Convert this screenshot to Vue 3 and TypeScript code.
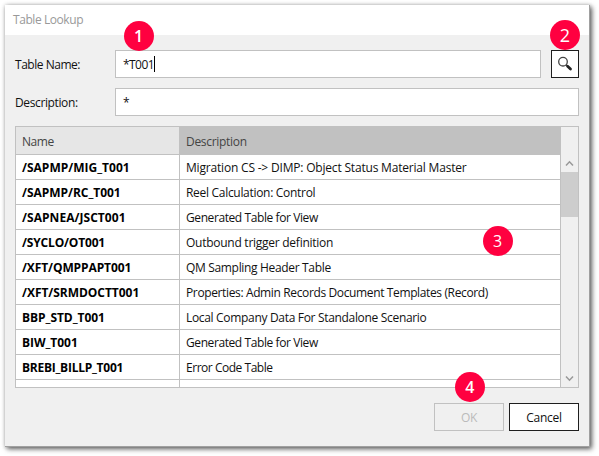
<script setup lang="ts">
import { ref } from 'vue'

interface TableRow {
  name: string
  description: string
  nameTracking: number
  descTracking: number
}

const tableName = ref('*T001')
const description = ref('*')

const rows: TableRow[] = [
  { name: '/SAPMP/MIG_T001', description: 'Migration CS -> DIMP: Object Status Material Master', nameTracking: 0, descTracking: -0.19 },
  { name: '/SAPMP/RC_T001', description: 'Reel Calculation: Control', nameTracking: -0.04, descTracking: -0.3 },
  { name: '/SAPNEA/JSCT001', description: 'Generated Table for View', nameTracking: 0.05, descTracking: -0.41 },
  { name: '/SYCLO/OT001', description: 'Outbound trigger definition', nameTracking: -0.17, descTracking: -0.26 },
  { name: '/XFT/QMPPAPT001', description: 'QM Sampling Header Table', nameTracking: -0.1, descTracking: -0.33 },
  { name: '/XFT/SRMDOCTT001', description: 'Properties: Admin Records Document Templates (Record)', nameTracking: -0.04, descTracking: -0.37 },
  { name: 'BBP_STD_T001', description: 'Local Company Data For Standalone Scenario', nameTracking: -0.05, descTracking: -0.32 },
  { name: 'BIW_T001', description: 'Generated Table for View', nameTracking: -0.05, descTracking: -0.41 },
  { name: 'BREBI_BILLP_T001', description: 'Error Code Table', nameTracking: -0.26, descTracking: -0.47 },
  { name: '', description: '', nameTracking: 0, descTracking: 0 },
]
</script>

<template>
  <div class="stage">
    <section class="dialog">
      <header class="title">Table Lookup</header>
      <div class="body">
        <div class="field">
          <span class="label label-name">Table Name:</span>
          <div class="input"><span class="value">{{ tableName }}</span><i class="caret"></i></div>
          <button class="search" aria-label="Search">
            <svg width="16" height="16" viewBox="0 0 16 16">
              <circle cx="6" cy="5.7" r="4.3" fill="#fff" stroke="#444" stroke-width="1.3" />
              <path d="M9 8.8l1.7 1.6" stroke="#444" stroke-width="1.3" />
              <path d="M10.6 10.3l2.9 2.8" stroke="#222" stroke-width="2.8" stroke-linecap="round" />
            </svg>
          </button>
        </div>
        <div class="field">
          <span class="label label-desc">Description:</span>
          <div class="input"><span class="value">{{ description }}</span></div>
        </div>
        <div class="grid">
          <div class="rows">
            <div class="row head">
              <div class="cell name">Name</div>
              <div class="cell desc">Description</div>
            </div>
            <div v-for="(row, i) in rows" :key="i" class="row">
              <div class="cell name" :style="{ letterSpacing: row.nameTracking + 'px' }">{{ row.name }}</div>
              <div class="cell desc" :style="{ letterSpacing: row.descTracking + 'px' }">{{ row.description }}</div>
            </div>
          </div>
          <div class="scroll">
            <svg class="arrow" width="9" height="7" viewBox="0 0 9 7"><path d="M1 5.6L4.5 1.8L8 5.6" /></svg>
            <div class="thumb"></div>
            <svg class="arrow down" width="9" height="7" viewBox="0 0 9 7"><path d="M1 1.4L4.5 5.2L8 1.4" /></svg>
          </div>
        </div>
        <footer class="actions">
          <button class="btn" disabled>OK</button>
          <button class="btn cancel">Cancel</button>
        </footer>
      </div>
    </section>
    <span class="badge b1">1</span>
    <span class="badge b2">2</span>
    <span class="badge b3">3</span>
    <span class="badge b4">4</span>
  </div>
</template>

<style>
body {
  background: #fff;
  overflow: hidden;
}
</style>

<style scoped>
.stage {
  position: relative;
  box-sizing: border-box;
  width: 599px;
  height: 456px;
  padding: 5px;
  font: 12px/16px 'Open Sans', 'Noto Sans', sans-serif;
  letter-spacing: -0.3px;
  color: #111;
}
.stage * {
  box-sizing: border-box;
}
.dialog {
  width: 585px;
  height: 442px;
  background: #f0f0f0;
  border-right: 1px solid #a0a0a0;
  border-bottom: 1px solid #a0a0a0;
  box-shadow: 2px 2px 5px rgba(0, 0, 0, 0.6), 0 0 4px rgba(0, 0, 0, 0.2);
}
.title {
  height: 30px;
  padding: 7px 8px;
  background: #fff;
  color: #999;
  letter-spacing: -0.43px;
}
.body {
  display: flex;
  flex-direction: column;
  gap: 10px;
  padding: 15px 10px 0;
}
.field {
  display: flex;
  height: 28px;
}
.label {
  width: 100px;
  line-height: 30px;
}
.label-name {
  letter-spacing: -0.47px;
}
.label-desc {
  letter-spacing: -0.38px;
}
.input {
  flex: 1;
  display: flex;
  align-items: center;
  padding-left: 7px;
  background: #fff;
  border: 1px solid #c1c1c1;
}
.value {
  padding-top: 1px;
  letter-spacing: -0.55px;
}
.caret {
  width: 1px;
  height: 16px;
  background: #000;
}
.search {
  display: flex;
  width: 28px;
  margin-left: 10px;
  padding: 5px 0 0 5px;
  background: #fff;
  border: 1px solid #1e1e1e;
}
.grid {
  display: flex;
  height: 262px;
  border: 1px solid #c1c1c1;
  background: #fff;
}
.rows {
  flex: 1;
  overflow: hidden;
}
.row {
  display: flex;
  height: 25px;
  line-height: 26px;
  border-bottom: 1px solid #c1c1c1;
}
.cell {
  padding-left: 6px;
  white-space: nowrap;
}
.name {
  width: 164px;
  border-right: 1px solid #c1c1c1;
  font-weight: 700;
  color: #000;
}
.desc {
  flex: 1;
}
.head {
  height: 28px;
  line-height: 30px;
}
.head .cell {
  font-weight: 400;
  color: #444;
}
.head .name {
  background: #e6e6e6;
  letter-spacing: -0.45px;
}
.head .desc {
  background: #c1c1c1;
}
.scroll {
  display: flex;
  flex-direction: column;
  align-items: center;
  width: 18px;
  padding-top: 33px;
  background: #f0f0f0;
  border-left: 1px solid #c1c1c1;
}
.arrow {
  flex: none;
  fill: none;
  stroke: #999;
  stroke-width: 1.5;
}
.thumb {
  width: 100%;
  height: 45px;
  margin-top: 5px;
  background: #cdcdcd;
}
.down {
  margin-top: auto;
  margin-bottom: 5px;
}
.actions {
  display: flex;
  justify-content: flex-end;
  gap: 5px;
  padding-top: 5px;
}
.btn {
  width: 70px;
  height: 28px;
  padding: 2px 0 0;
  font: inherit;
  letter-spacing: inherit;
  color: #bbb;
  background: #f0f0f0;
  border: 1px solid #c1c1c1;
}
.cancel {
  color: #111;
  background: #fff;
  border-color: #1e1e1e;
}
.badge {
  position: absolute;
  width: 30px;
  height: 30px;
  border-radius: 50%;
  background: #ff0040;
  color: #fff;
  font: 16px/30px 'Open Sans', sans-serif;
  text-align: center;
}
.b1 {
  left: 123.5px;
  top: 20.5px;
  font-weight: 600;
}
.b2 {
  left: 549.7px;
  top: 19.5px;
  font-size: 18px;
}
.b3 {
  left: 482.5px;
  top: 225.6px;
}
.b4 {
  left: 454.7px;
  top: 371.6px;
  font-weight: 600;
}
</style>
